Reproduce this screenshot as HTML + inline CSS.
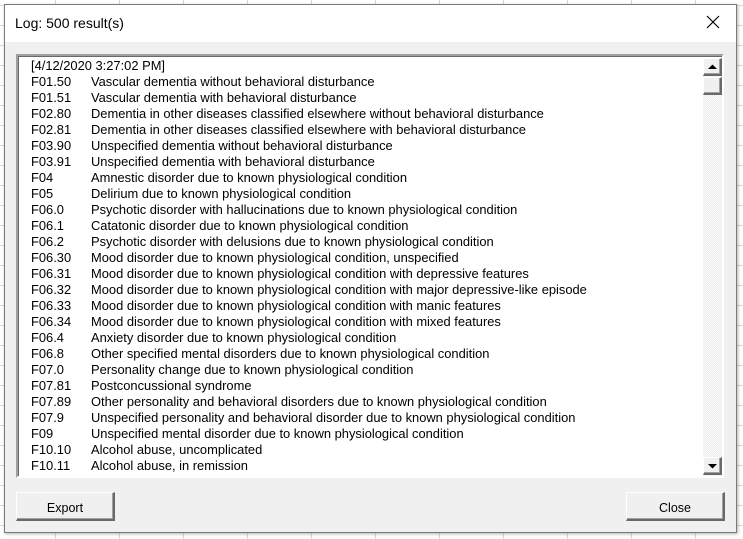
<!DOCTYPE html>
<html><head><style>
body{margin:0;width:743px;height:539px;overflow:hidden;background:#fff;font-family:"Liberation Sans",sans-serif;position:relative;
background-image:linear-gradient(#d8d8d8 1px,transparent 1px),linear-gradient(90deg,#d8d8d8 1px,transparent 1px);background-size:64px 20px,64px 20px;background-position:0 5px,55px 0}
#dlg{position:absolute;left:4px;top:4px;width:731px;height:527px;background:#f0f0f0;border:1px solid #7a7a7a;box-shadow:1px 1px 3px rgba(0,0,0,.3)}
#title{position:absolute;left:0;top:0;width:731px;height:37px;background:#fff}
#title span{position:absolute;left:10px;top:10px;font-size:14px;color:#000}
#x{position:absolute;left:700px;top:9px}
#list{position:absolute;left:11px;top:49px;width:704px;height:420px;background:#fff;border-top:2px solid #a0a0a0;border-left:2px solid #a0a0a0;border-right:2px solid #fff;border-bottom:2px solid #fff;box-shadow:inset 1px 1px 0 #696969;overflow:hidden}
.r{position:absolute;left:13px;font-size:12.9px;color:#000;white-space:pre;height:16px;line-height:16px}
.r b{font-weight:normal;display:inline-block;width:60px}
#sb{position:absolute;left:685px;top:2px;width:19px;height:418px;background:repeating-conic-gradient(#fafafa 0 25%,#ececec 0 50%) 0 0/2px 2px}
.btn{position:absolute;box-sizing:border-box;background:#f0f0f0;border-top:1px solid #fff;border-left:1px solid #fff;border-right:2px solid #696969;border-bottom:2px solid #696969;box-shadow:inset -1px -1px 0 #a0a0a0}
.pb{position:absolute;font-size:12.5px;text-align:center;line-height:26px}
</style></head><body>
<div id="dlg">
<div id="title"><span>Log: 500 result(s)</span>
<svg id="x" width="16" height="16"><path d="M2 2L14 14M14 2L2 14" stroke="#000" stroke-width="1.2"/></svg></div>
<div id="list">
<div class="r" style="top:2px">[4/12/2020 3:27:02 PM]</div>
<div class="r" style="top:18px"><b>F01.50</b>Vascular dementia without behavioral disturbance</div>
<div class="r" style="top:34px"><b>F01.51</b>Vascular dementia with behavioral disturbance</div>
<div class="r" style="top:50px"><b>F02.80</b>Dementia in other diseases classified elsewhere without behavioral disturbance</div>
<div class="r" style="top:66px"><b>F02.81</b>Dementia in other diseases classified elsewhere with behavioral disturbance</div>
<div class="r" style="top:82px"><b>F03.90</b>Unspecified dementia without behavioral disturbance</div>
<div class="r" style="top:98px"><b>F03.91</b>Unspecified dementia with behavioral disturbance</div>
<div class="r" style="top:114px"><b>F04</b>Amnestic disorder due to known physiological condition</div>
<div class="r" style="top:130px"><b>F05</b>Delirium due to known physiological condition</div>
<div class="r" style="top:146px"><b>F06.0</b>Psychotic disorder with hallucinations due to known physiological condition</div>
<div class="r" style="top:162px"><b>F06.1</b>Catatonic disorder due to known physiological condition</div>
<div class="r" style="top:178px"><b>F06.2</b>Psychotic disorder with delusions due to known physiological condition</div>
<div class="r" style="top:194px"><b>F06.30</b>Mood disorder due to known physiological condition, unspecified</div>
<div class="r" style="top:210px"><b>F06.31</b>Mood disorder due to known physiological condition with depressive features</div>
<div class="r" style="top:226px"><b>F06.32</b>Mood disorder due to known physiological condition with major depressive-like episode</div>
<div class="r" style="top:242px"><b>F06.33</b>Mood disorder due to known physiological condition with manic features</div>
<div class="r" style="top:258px"><b>F06.34</b>Mood disorder due to known physiological condition with mixed features</div>
<div class="r" style="top:274px"><b>F06.4</b>Anxiety disorder due to known physiological condition</div>
<div class="r" style="top:290px"><b>F06.8</b>Other specified mental disorders due to known physiological condition</div>
<div class="r" style="top:306px"><b>F07.0</b>Personality change due to known physiological condition</div>
<div class="r" style="top:322px"><b>F07.81</b>Postconcussional syndrome</div>
<div class="r" style="top:338px"><b>F07.89</b>Other personality and behavioral disorders due to known physiological condition</div>
<div class="r" style="top:354px"><b>F07.9</b>Unspecified personality and behavioral disorder due to known physiological condition</div>
<div class="r" style="top:370px"><b>F09</b>Unspecified mental disorder due to known physiological condition</div>
<div class="r" style="top:386px"><b>F10.10</b>Alcohol abuse, uncomplicated</div>
<div class="r" style="top:402px"><b>F10.11</b>Alcohol abuse, in remission</div>
<div id="sb">
<div class="btn" style="left:0;top:0;width:19px;height:18px"><svg width="16" height="15" style="position:absolute;left:0;top:0"><path d="M4 10h9L8.5 5.5z" fill="#000"/></svg></div>
<div class="btn" style="left:0;top:19px;width:19px;height:18px"></div>
<div class="btn" style="left:0;top:399px;width:19px;height:18px"><svg width="16" height="15" style="position:absolute;left:0;top:0"><path d="M4 6h9L8.5 10.5z" fill="#000"/></svg></div>
</div>
</div>
<div class="btn" style="left:11px;top:487px;width:99px;height:29px"><div class="pb" style="left:0;top:2px;width:96px">Export</div></div>
<div class="btn" style="left:621px;top:487px;width:99px;height:29px"><div class="pb" style="left:0;top:2px;width:96px">Close</div></div>
</div>
</body></html>
